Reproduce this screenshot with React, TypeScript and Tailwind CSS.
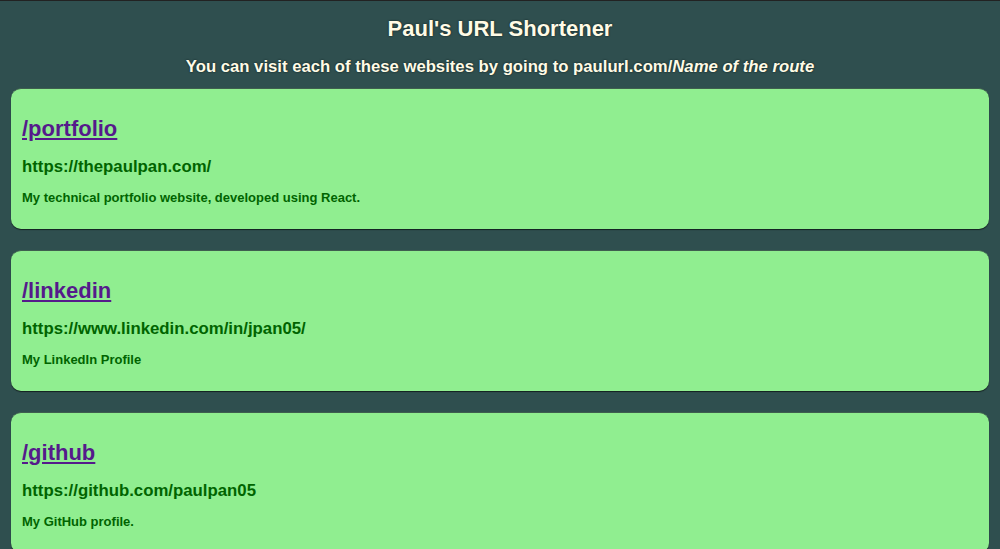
import React from "react";

const routes = [
  {
    route: "/portfolio",
    url: "https://thepaulpan.com/",
    description: "My technical portfolio website, developed using React.",
  },
  {
    route: "/linkedin",
    url: "https://www.linkedin.com/in/jpan05/",
    description: "My LinkedIn Profile",
  },
  {
    route: "/github",
    url: "https://github.com/paulpan05",
    description: "My GitHub profile.",
  },
];

const RouteCard: React.FC<{ route: string; url: string; description: string }> = ({ route, url, description }) => (
  <div className="rounded-[10px] bg-[#90ee90] px-[11px] pt-[26px] pb-[22px] shadow-[0_1px_1px_rgba(0,0,0,0.6)] border-t border-t-[#3f5f4f]">
    <a href={url} className="block text-[22px] leading-[28px] font-bold text-[#551a8b] underline">
      {route}
    </a>
    <div className="mt-[13px] text-[16.8px] leading-[22px] font-bold text-[#006400]">{url}</div>
    <div className="mt-[11px] text-[13px] leading-[18px] font-bold text-[#006400]">{description}</div>
  </div>
);

export default function App() {
  return (
    <div className="min-h-[549px] bg-[#2f4f4f] border-t border-t-[#222] font-['Liberation_Sans',Arial,sans-serif]">
      <div className="pt-[15px] text-center text-[#fffbe6] font-bold [text-shadow:0_0_2px_#0a1a1a]">
        <h1 className="text-[22px] leading-[26px]">Paul's URL Shortener</h1>
        <p className="mt-[15px] text-[16.7px] leading-[20px]">
          You can visit each of these websites by going to paulurl.com/<i>Name of the route</i>
        </p>
      </div>
      <div className="mt-[11px] flex flex-col gap-[21px] px-[11px]">
        {routes.map(r => (
          <RouteCard key={r.route} {...r} />
        ))}
      </div>
    </div>
  );
}
